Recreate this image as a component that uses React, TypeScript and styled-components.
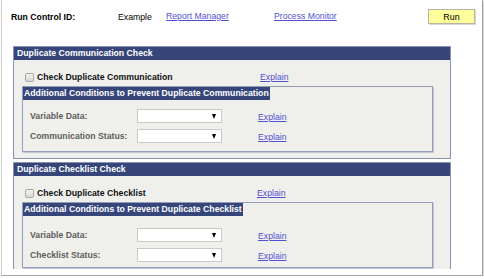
import React from 'react'
import styled, { createGlobalStyle } from 'styled-components'

const GlobalStyle = createGlobalStyle`
  body {
    margin: 0;
    background: #ffffff;
    font-family: "Liberation Sans", Arial, sans-serif;
  }
`

const NAVY = '#37467a'
const LINK = '#5251cf'

interface Field {
  label: string
}

interface CheckSection {
  title: string
  checkLabel: string
  explainAt: number
  groupTitle: string
  labelGap: number
  bottom: number
  fields: Field[]
}

const sections: CheckSection[] = [
  {
    title: 'Duplicate Communication Check',
    checkLabel: 'Check Duplicate Communication',
    explainAt: 235,
    groupTitle: 'Additional Conditions to Prevent Duplicate Communication',
    labelGap: 9,
    bottom: 8,
    fields: [{ label: 'Variable Data:' }, { label: 'Communication Status:' }],
  },
  {
    title: 'Duplicate Checklist Check',
    checkLabel: 'Check Duplicate Checklist',
    explainAt: 232,
    groupTitle: 'Additional Conditions to Prevent Duplicate Checklist',
    labelGap: 12,
    bottom: 5,
    fields: [{ label: 'Variable Data:' }, { label: 'Checklist Status:' }],
  },
]

const App: React.FC = () => {
  return (
    <>
      <GlobalStyle />
      <Frame>
        <Viewport>
          <Toolbar>
            <FieldName>Run Control ID:</FieldName>
            <Plain>Example</Plain>
            <Link href="#">Report Manager</Link>
            <Link href="#">Process Monitor</Link>
            <RunButton type="button">Run</RunButton>
          </Toolbar>
          <Sections>
            {sections.map((s) => (
              <Section key={s.title}>
                <SectionHeader>{s.title}</SectionHeader>
                <SectionBody>
                  <CheckRow>
                    <CheckCell $width={s.explainAt}>
                      <Checkbox />
                      <CheckText>{s.checkLabel}</CheckText>
                    </CheckCell>
                    <Link href="#">Explain</Link>
                  </CheckRow>
                  <GroupBox $bottom={s.bottom}>
                    <GroupTitle>{s.groupTitle}</GroupTitle>
                    <FieldList $top={s.labelGap}>
                      {s.fields.map((f) => (
                        <FieldRow key={f.label}>
                          <FieldLabel>{f.label}</FieldLabel>
                          <Select>
                            <Arrow />
                          </Select>
                          <Link href="#">Explain</Link>
                        </FieldRow>
                      ))}
                    </FieldList>
                  </GroupBox>
                </SectionBody>
              </Section>
            ))}
          </Sections>
        </Viewport>
      </Frame>
    </>
  )
}

const Frame = styled.div`
  box-sizing: border-box;
  width: 482px;
  height: 276px;
  margin-left: 1px;
  padding-bottom: 6px;
  background: #ffffff;
  border-left: 1px solid #cfcfcf;
  border-right: 1px solid #a3a3a3;
  border-bottom: 1px solid #a3a3a3;
  box-shadow: 1px 1px 2px rgba(0, 0, 0, 0.25);
`

const Viewport = styled.div`
  height: 269px;
  overflow: hidden;
`

const Toolbar = styled.div`
  display: grid;
  grid-template-columns: 107px 48px 108px 1fr 47px;
  align-items: center;
  height: 15px;
  margin: 9px 7px 0 9px;
  font-size: 8.7px;
`

const FieldName = styled.span`
  font-weight: 700;
  color: #000000;
`

const Plain = styled.span`
  color: #000000;
`

const Link = styled.a`
  color: ${LINK};
  font-size: 8.7px;
  line-height: 11px;
  text-decoration: underline;
  white-space: nowrap;
`

const RunButton = styled.button`
  box-sizing: border-box;
  width: 47px;
  height: 15px;
  padding: 0;
  background: #ffff9c;
  border: 1px solid #b4b4a0;
  box-shadow: 1px 1px 0 #d8d8d0;
  font-family: "Liberation Sans", Arial, sans-serif;
  font-size: 9px;
  color: #000000;
`

const Sections = styled.div`
  display: flex;
  flex-direction: column;
  gap: 3px;
  margin-top: 22px;
  padding-left: 11px;
`

const Section = styled.div`
  width: 438px;
  box-sizing: border-box;
  border: 1px solid #8a92b3;
  background: #eff0ec;
`

const SectionHeader = styled.div`
  height: 13px;
  line-height: 13px;
  padding-left: 3px;
  background: ${NAVY};
  color: #ffffff;
  font-size: 8.7px;
  font-weight: 700;
`

const SectionBody = styled.div`
  display: flex;
  flex-direction: column;
  padding: 10px 0 6px 8px;
`

const CheckRow = styled.div`
  display: flex;
  align-items: center;
  height: 14px;
  padding-left: 3px;
`

const CheckCell = styled.div<{ $width: number }>`
  display: flex;
  align-items: center;
  gap: 3px;
  width: ${(p) => p.$width}px;
`

const Checkbox = styled.span`
  box-sizing: border-box;
  width: 9px;
  height: 9px;
  border: 1px solid #a8a8a8;
  border-radius: 2px;
  background: linear-gradient(#f4f4f4, #d6d6d6);
`

const CheckText = styled.span`
  font-size: 8.7px;
  line-height: 11px;
  font-weight: 700;
  color: #111111;
`

const GroupBox = styled.div<{ $bottom: number }>`
  box-sizing: border-box;
  display: flex;
  flex-direction: column;
  align-items: flex-start;
  width: 411px;
  margin-top: 2px;
  padding-bottom: ${(p) => p.$bottom}px;
  border: 1px solid #959cba;
  box-shadow: 1px 1px 0 #c4c7d4;
`

const GroupTitle = styled.div`
  height: 13px;
  line-height: 13px;
  padding: 0 1px;
  background: ${NAVY};
  color: #ffffff;
  font-size: 8.7px;
  font-weight: 700;
  white-space: nowrap;
`

const FieldList = styled.div<{ $top: number }>`
  display: flex;
  flex-direction: column;
  gap: 6px;
  padding: ${(p) => p.$top}px 0 0 7px;
`

const FieldRow = styled.div`
  display: grid;
  grid-template-columns: 107px 85px 36px auto;
  align-items: center;
  height: 14px;

  & > a {
    grid-column: 4;
    padding-top: 2px;
  }
`

const FieldLabel = styled.span`
  font-size: 8.7px;
  line-height: 11px;
  font-weight: 700;
  color: #5e5e5e;
`

const Select = styled.div`
  box-sizing: border-box;
  position: relative;
  width: 85px;
  height: 14px;
  background: #ffffff;
  border: 1px solid #c9c9c9;
`

const Arrow = styled.span`
  position: absolute;
  right: 5px;
  top: 4px;
  width: 0;
  height: 0;
  border-left: 2.5px solid transparent;
  border-right: 2.5px solid transparent;
  border-top: 5px solid #000000;
`

export default App
